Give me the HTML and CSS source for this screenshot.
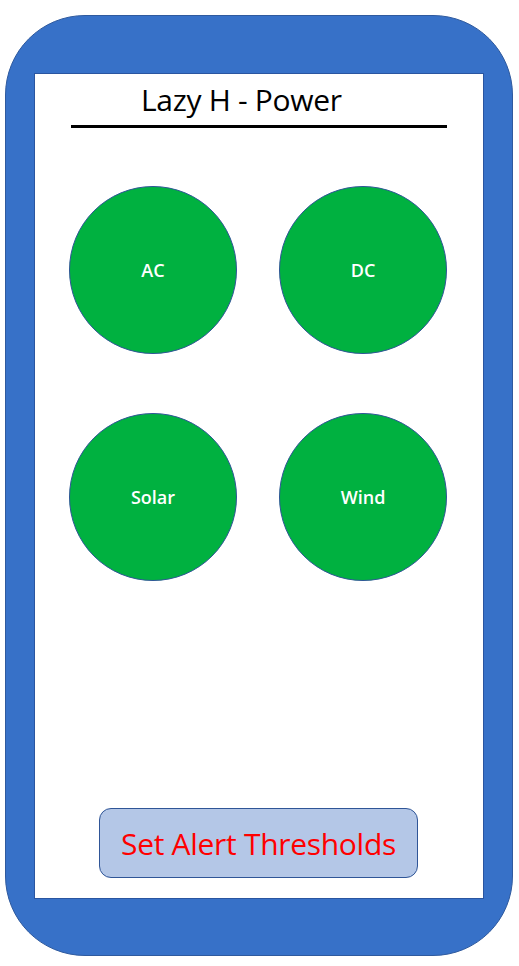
FILE: index.html
```html
<!DOCTYPE html>
<html>
<head>
<meta charset="utf-8">
<link rel="stylesheet" href="styles.css">
</head>
<body>
<div class="phone">
  <div class="screen">
    <h1 class="title">Lazy H - Power</h1>
    <div class="rule"></div>
    <div class="grid">
      <div class="circle">AC</div>
      <div class="circle">DC</div>
      <div class="circle">Solar</div>
      <div class="circle">Wind</div>
    </div>
    <div class="spacer"></div>
    <button class="alert-btn">Set Alert Thresholds</button>
  </div>
</div>
</body>
</html>
```

FILE: styles.css
```css
html, body {
  margin: 0;
  padding: 0;
  background: #ffffff;
}
body {
  font-family: "Open Sans", "Noto Sans", sans-serif;
}
.phone {
  box-sizing: border-box;
  margin: 15px 0 0 5px;
  width: 508px;
  height: 941px;
  background: #3771c8;
  border: 1px solid #2f5a9e;
  border-radius: 80px;
  padding: 57px 29px 57px 28px;
}
.screen {
  box-sizing: border-box;
  width: 450px;
  height: 826px;
  background: #ffffff;
  border: 1px solid #2a55a0;
  display: flex;
  flex-direction: column;
  align-items: flex-start;
}
.title {
  margin: 6px 0 0 106px;
  font-size: 30px;
  font-weight: 400;
  line-height: 40px;
  color: #000;
  letter-spacing: -0.3px;
}
.rule {
  margin-top: 5px;
  margin-left: 36px;
  width: 376px;
  height: 3px;
  background: #000;
}
.grid {
  margin-top: 58px;
  margin-left: 34px;
  display: grid;
  grid-template-columns: 168px 168px;
  column-gap: 42px;
  row-gap: 59px;
}
.circle {
  box-sizing: border-box;
  width: 168px;
  height: 168px;
  border-radius: 50%;
  background: #00b140;
  border: 1px solid #2f5597;
  display: flex;
  align-items: center;
  justify-content: center;
  color: #ffffff;
  font-weight: 600;
  font-size: 18px;
}
.spacer {
  flex: 1;
}
.alert-btn {
  box-sizing: border-box;
  width: 319px;
  height: 70px;
  margin: 0 0 20px 64px;
  background: #b4c7e7;
  border: 1px solid #2f5597;
  border-radius: 12px;
  color: #ff0000;
  font-family: "Open Sans", "Noto Sans", sans-serif;
  font-size: 30px;
  letter-spacing: -0.3px;
  padding: 0;
}
```
